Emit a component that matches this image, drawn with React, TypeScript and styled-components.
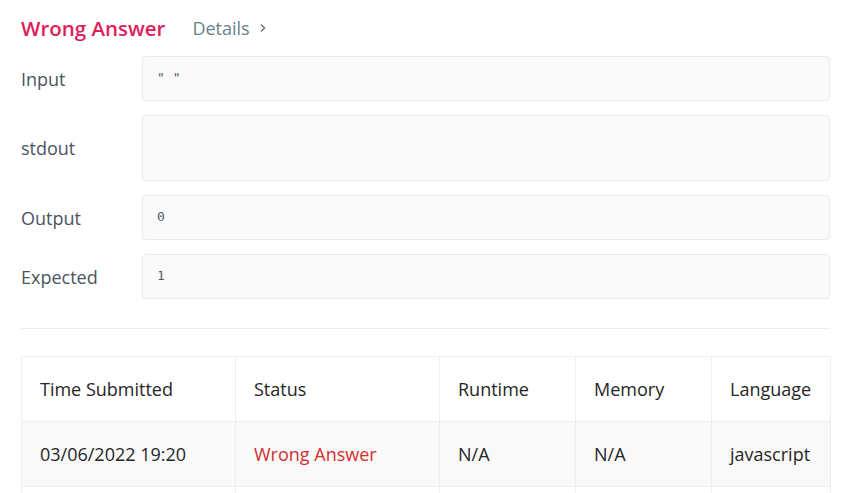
import React from "react";
import styled, { createGlobalStyle } from "styled-components";

const GlobalStyle = createGlobalStyle`
  html, body {
    margin: 0;
    padding: 0;
    background: #ffffff;
    font-family: "Open Sans", "Noto Sans", "Liberation Sans", sans-serif;
  }
`;

type IoRow = {
  label: string;
  value: string;
  tall?: boolean;
};

const ioRows: IoRow[] = [
  { label: "Input", value: '" "' },
  { label: "stdout", value: "", tall: true },
  { label: "Output", value: "0" },
  { label: "Expected", value: "1" },
];

const columns = [
  { title: "Time Submitted", width: 214 },
  { title: "Status", width: 204 },
  { title: "Runtime", width: 136 },
  { title: "Memory", width: 136 },
  { title: "Language", width: 119 },
];

const App = () => {
  return (
    <Container>
      <GlobalStyle />
      <Header>
        <Title>Wrong Answer</Title>
        <Details>
          Details
          <svg width="8" height="10" viewBox="0 0 8 10">
            <path d="M2 1.5 L5.5 5 L2 8.5" fill="none" stroke="#6b7f8e" strokeWidth="1.6" />
          </svg>
        </Details>
      </Header>
      <IoList>
        {ioRows.map((row) => (
          <IoLine key={row.label}>
            <Label>{row.label}</Label>
            <CodeBox $tall={row.tall}>{row.value}</CodeBox>
          </IoLine>
        ))}
      </IoList>
      <Divider />
      <Table>
        <colgroup>
          {columns.map((c) => (
            <col key={c.title} style={{ width: c.width }} />
          ))}
        </colgroup>
        <thead>
          <tr>
            {columns.map((c) => (
              <Th key={c.title}>{c.title}</Th>
            ))}
          </tr>
        </thead>
        <tbody>
          <DataRow>
            <Td>03/06/2022 19:20</Td>
            <Td $status>Wrong Answer</Td>
            <Td>N/A</Td>
            <Td>N/A</Td>
            <Td>javascript</Td>
          </DataRow>
          <tr>
            <Td />
            <Td />
            <Td />
            <Td />
            <Td />
          </tr>
        </tbody>
      </Table>
    </Container>
  );
};

export default App;

const Container = styled.div`
  width: 809px;
  padding: 12px 21px 0 21px;
  height: 481px;
  overflow: hidden;
`;

const Header = styled.div`
  display: flex;
  align-items: center;
  height: 32px;
  gap: 27px;
`;

const Title = styled.div`
  font-size: 20.5px;
  font-weight: 600;
  color: #dd1e5b;
`;

const Details = styled.div`
  display: flex;
  align-items: center;
  gap: 9px;
  font-size: 18px;
  color: #6b7f8e;
`;

const IoList = styled.div`
  display: flex;
  flex-direction: column;
  gap: 14px;
  margin-top: 12px;
`;

const IoLine = styled.div`
  display: flex;
  align-items: center;
`;

const Label = styled.div`
  width: 121px;
  font-size: 18px;
  color: #4a5560;
`;

const CodeBox = styled.div<{ $tall?: boolean }>`
  flex: 1;
  box-sizing: border-box;
  height: ${(p) => (p.$tall ? "66px" : "45px")};
  background: #fafafa;
  border: 1px solid #ebebeb;
  border-radius: 4px;
  padding: 12px 14px;
  font-family: "DejaVu Sans Mono", "Liberation Mono", monospace;
  font-size: 13px;
  line-height: 18px;
  color: #4f5d6b;
  white-space: pre;
`;

const Divider = styled.div`
  height: 1px;
  background: #eeeeee;
  margin-top: 29px;
`;

const Table = styled.table`
  margin-top: 27px;
  width: 809px;
  border-collapse: collapse;
  table-layout: fixed;
  font-size: 18px;
  color: #262626;
`;

const Th = styled.th`
  height: 64px;
  padding: 0 0 0 18px;
  text-align: left;
  font-weight: 400;
  border: 1px solid #eeeeee;
`;

const DataRow = styled.tr`
  background: #f9f9f9;
`;

const Td = styled.td<{ $status?: boolean }>`
  height: 64px;
  padding: 0 0 0 18px;
  border: 1px solid #eeeeee;
  color: ${(p) => (p.$status ? "#d32f2f" : "#262626")};
`;
